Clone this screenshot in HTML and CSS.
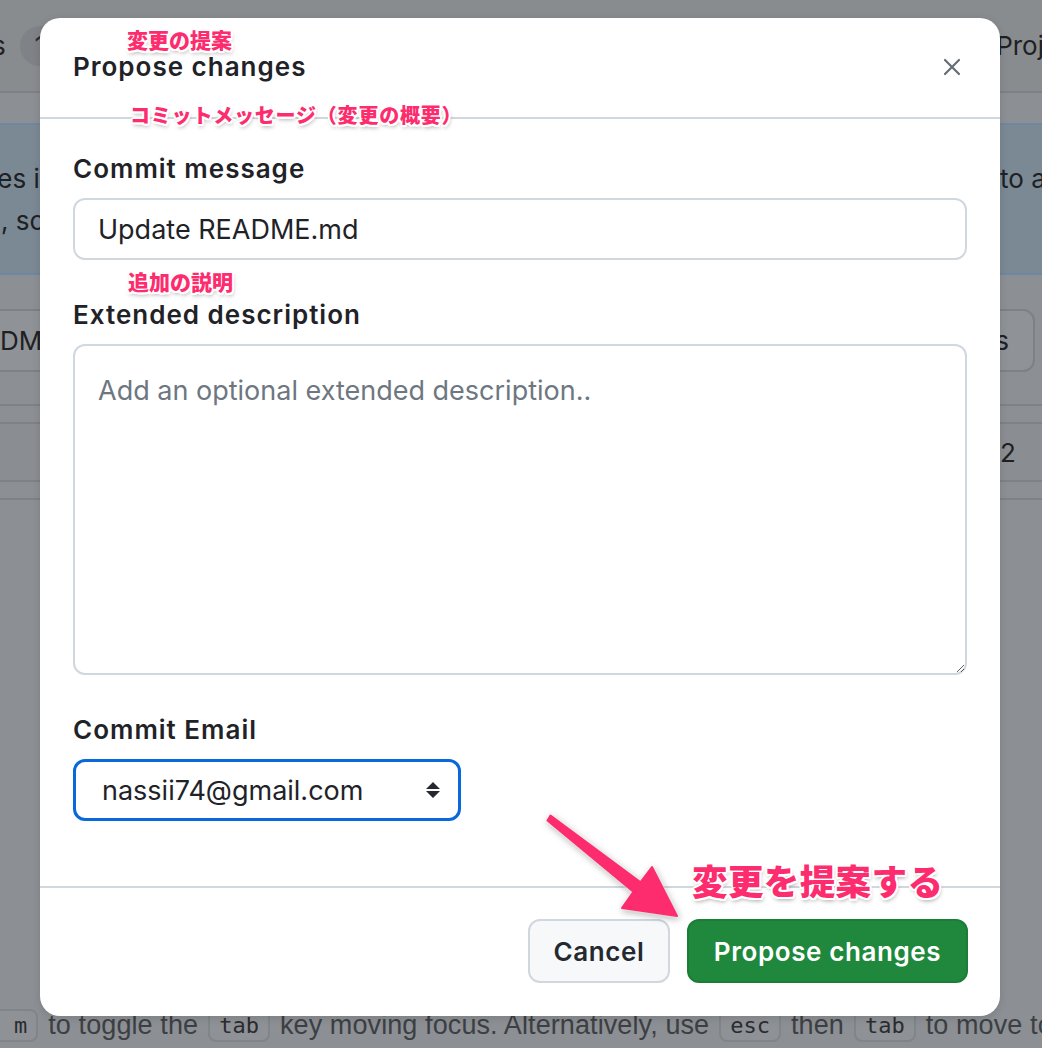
FILE: index.html
```html
<!DOCTYPE html>
<html lang="ja">
<head>
<meta charset="utf-8">
<title>Propose changes</title>
<link rel="stylesheet" href="styles.css">
</head>
<body>
<div class="page">
  <div class="topnav">
    <div class="nav-left"><span class="nav-s">s</span><span class="nav-pill">1</span></div>
    <div class="nav-right">Projects</div>
  </div>
  <div class="banner">
    <div class="banner-row"><span class="bl">files in</span><span class="br">to a</span></div>
    <div class="banner-row"><span class="bl2">, so</span><span class="br"></span></div>
  </div>
  <div class="toolbar">
    <span class="tb-btn tb-left">DM</span>
    <span class="tb-btn tb-right">s</span>
  </div>
  <div class="rows">
    <div class="row-a"></div>
    <div class="row-b"><span class="num">2</span></div>
    <div class="row-c"></div>
  </div>
  <div class="spacer"></div>
  <div class="hint"><span class="kbd kbd-first">m</span> to toggle the <span class="kbd">tab</span> key moving focus. Alternatively, use <span class="kbd">esc</span> then <span class="kbd">tab</span> to move to</div>
</div>

<div class="modal">
  <div class="modal-header">
    <h1 class="modal-title">Propose changes</h1>
    <button class="close-btn" aria-label="Close">
      <svg width="18" height="18" viewBox="0 0 18 18"><path d="M2 2 L16 16 M16 2 L2 16" stroke="#656d76" stroke-width="2.2" stroke-linecap="round" fill="none"/></svg>
    </button>
  </div>
  <div class="modal-body">
    <label class="field-label">Commit message</label>
    <div class="text-input">Update README.md</div>
    <label class="field-label gap">Extended description</label>
    <textarea class="text-area" placeholder="Add an optional extended description.."></textarea>
    <label class="field-label gap">Commit Email</label>
    <div class="select">
      <span>nassii74@gmail.com</span>
      <svg width="16" height="20" viewBox="0 0 16 20"><path d="M8 2 L15 9 L1 9 Z M1 11 L15 11 L8 18 Z" fill="#24292f"/></svg>
    </div>
  </div>
  <div class="modal-footer">
    <button class="btn btn-cancel">Cancel</button>
    <button class="btn btn-primary">Propose changes</button>
  </div>
</div>

<div class="note note-title">変更の提案</div>
<div class="note note-msg">コミットメッセージ（変更の概要）</div>
<div class="note note-desc">追加の説明</div>
<div class="note note-big">変更を提案する</div>
<svg class="arrow" width="1042" height="1048" viewBox="0 0 1042 1048">
  <polygon points="550.5,815.5 640.6,882.2 652,867 677,916 622,908 633.4,891.8 547.5,820.5" fill="#fd2c6e" stroke="#fd2c6e" stroke-width="2" stroke-linejoin="round"/>
</svg>
</body>
</html>
```

FILE: styles.css
```css
* { box-sizing: border-box; }
html, body { margin: 0; padding: 0; }
body {
  width: 1042px;
  height: 1048px;
  overflow: hidden;
  position: relative;
  font-family: Inter, "Liberation Sans", sans-serif;
  background: #8b8e92;
}

/* dimmed background page */
.page {
  width: 1042px;
  height: 1048px;
  display: flex;
  flex-direction: column;
  background: #8c8f93;
  color: #1e2023;
  overflow: hidden;
}
.topnav {
  height: 93px;
  flex: none;
  display: flex;
  justify-content: space-between;
  align-items: center;
  background: #898c8f;
  border-bottom: 2px solid #7e8185;
  font-size: 26px;
}
.nav-left { display: flex; align-items: center; margin-left: -8px; gap: 14px; }
.nav-pill {
  display: inline-flex; align-items: center; justify-content: center;
  width: 40px; height: 40px; border-radius: 20px; background: #7f8286; color: #2a2c2f;
}
.nav-right { margin-right: -54px; }
.banner {
  margin-top: 30px;
  height: 152px;
  flex: none;
  background: #7b8995;
  border-top: 2px solid #6d88a3;
  border-bottom: 2px solid #6d88a3;
  display: flex;
  flex-direction: column;
  justify-content: center;
  gap: 8px;
  font-size: 26px;
}
.banner-row { display: flex; justify-content: space-between; height: 34px; align-items: center; }
.banner-row .bl { margin-left: -25px; }
.banner-row .bl2 { margin-left: 1px; }
.banner-row .br { width: 42px; overflow: hidden; white-space: nowrap; }
.toolbar {
  margin-top: 34px;
  height: 63px;
  flex: none;
  display: flex;
  justify-content: space-between;
  font-size: 26px;
}
.tb-btn {
  display: flex; align-items: center;
  border: 2px solid #7d8084; border-radius: 12px;
  background: #8f9296;
}
.tb-left { margin-left: -30px; padding: 0 30px 0 28px; }
.tb-right { margin-right: 7px; padding: 0 24px 0 30px; }
.rows { margin-top: 32px; flex: none; }
.row-a { height: 20px; border-top: 2px solid #7e8185; border-bottom: 2px solid #7e8185; }
.row-b {
  height: 58px; display: flex; justify-content: flex-end; align-items: center;
  border-bottom: 2px solid #7e8185; background: #8a8d91; font-size: 26px;
}
.row-c { height: 18px; border-bottom: 2px solid #7e8185; }
.num { width: 42px; }
.spacer { flex: 1; }
.hint {
  height: 46px;
  flex: none;
  display: flex;
  align-items: center;
  gap: 10px;
  white-space: nowrap;
  font-family: "Liberation Sans", sans-serif;
  font-size: 27px;
  letter-spacing: 0.1px;
  color: #3c3f43;
}
.kbd {
  font-family: "DejaVu Sans Mono", monospace;
  font-size: 22px;
  letter-spacing: 0;
  border: 2px solid #818488;
  border-radius: 8px;
  padding: 2px 9px;
  color: #2a2c2f;
  background: #8e9195;
}
.kbd-first { margin-left: -30px; padding-left: 42px; }

/* modal */
.modal {
  position: absolute;
  left: 40px;
  top: 18px;
  width: 960px;
  height: 998px;
  background: #fff;
  border-radius: 20px;
  display: flex;
  flex-direction: column;
  color: #1f2328;
  box-shadow: 0 2px 8px rgba(0,0,0,0.12);
}
.modal-header {
  height: 101px;
  flex: none;
  display: flex;
  align-items: center;
  justify-content: space-between;
  padding: 0 39px 2px 33px;
  border-bottom: 2px solid #d0d7de;
}
.modal-title {
  margin: 0;
  font-size: 26px;
  font-weight: 600;
  letter-spacing: 1px;
}
.close-btn {
  border: none; background: none; padding: 0; width: 18px; height: 18px;
  display: flex; align-items: center; justify-content: center;
}
.modal-body {
  flex: none;
  display: flex;
  flex-direction: column;
  padding: 34px 33px 65px;
  border-bottom: 2px solid #d0d7de;
}
.field-label {
  font-size: 26px;
  font-weight: 600;
  letter-spacing: 1px;
  line-height: 31px;
  margin-bottom: 14px;
}
.field-label.gap { margin-top: 39px; }
.text-input {
  height: 62px;
  flex: none;
  border: 2px solid #d0d7de;
  border-radius: 12px;
  padding: 0 23px;
  display: flex;
  align-items: center;
  font-size: 27px;
  color: #1f2328;
}
.text-area {
  height: 331px;
  flex: none;
  border: 2px solid #d0d7de;
  border-radius: 12px;
  padding: 28px 23px;
  font-family: Inter, "Liberation Sans", sans-serif;
  font-size: 27px;
  line-height: 34px;
  color: #1f2328;
  resize: vertical;
  outline: none;
  margin: 0;
}
.text-area::placeholder { color: #6e7781; }
.select {
  width: 388px;
  height: 62px;
  flex: none;
  border: 3px solid #0969da;
  border-radius: 12px;
  padding: 0 17px 0 26px;
  display: flex;
  align-items: center;
  justify-content: space-between;
  font-size: 27px;
}
.modal-footer {
  flex: 1;
  display: flex;
  justify-content: flex-end;
  align-items: flex-start;
  gap: 17px;
  padding: 31px 32px 0;
}
.btn {
  height: 64px;
  border-radius: 12px;
  font-family: Inter, "Liberation Sans", sans-serif;
  font-size: 26px;
  font-weight: 600;
  letter-spacing: 0.6px;
  padding: 0 20px;
}
.btn-cancel {
  width: 142px;
  background: #f6f8fa;
  border: 2px solid #d0d7de;
  color: #24292f;
}
.btn-primary {
  width: 281px;
  background: #1f883d;
  border: 2px solid #1c7d38;
  color: #fff;
}

/* annotations */
.note {
  position: absolute;
  font-family: "Noto Sans CJK JP", sans-serif;
  font-weight: 900;
  color: #fd2c6e;
  white-space: nowrap;
  text-shadow:
    -2px 0 0 #fff, 2px 0 0 #fff, 0 -2px 0 #fff, 0 2px 0 #fff,
    -1.5px -1.5px 0 #fff, 1.5px 1.5px 0 #fff, -1.5px 1.5px 0 #fff, 1.5px -1.5px 0 #fff,
    1px 3px 4px rgba(0,0,0,0.35);
}
.note-title { left: 127px; top: 24px; font-size: 21px; line-height: 30px; }
.note-msg { left: 130px; top: 100px; font-size: 20px; line-height: 30px; letter-spacing: 0.8px; }
.note-desc { left: 128px; top: 266px; font-size: 21px; line-height: 30px; }
.note-big { left: 692px; top: 855px; font-size: 35.5px; line-height: 50px; letter-spacing: 0.4px; }
.arrow {
  position: absolute;
  left: 0;
  top: 0;
  pointer-events: none;
  filter: drop-shadow(0 0 1.5px #fff) drop-shadow(1px 2px 3px rgba(0,0,0,0.3));
}
```
